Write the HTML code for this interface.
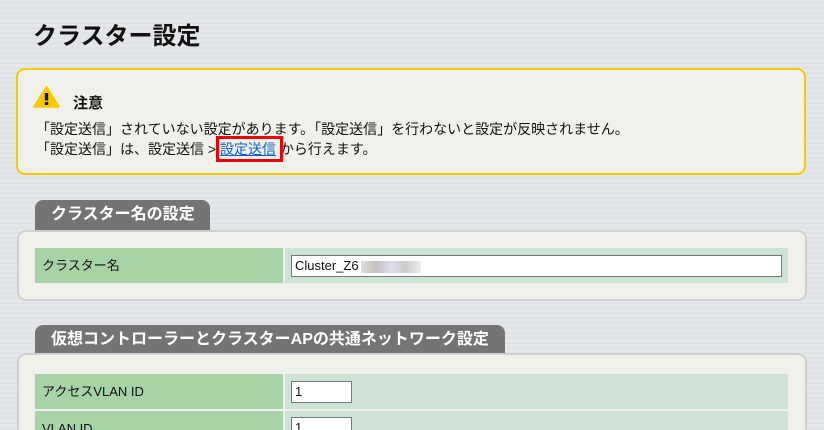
<!DOCTYPE html>
<html><head><meta charset="utf-8"><style>
html,body{margin:0;padding:0;width:824px;height:430px;overflow:hidden}
#w{position:relative;width:824px;height:430px;overflow:hidden;font-family:"Liberation Sans","Noto Sans CJK JP",sans-serif;
background:repeating-linear-gradient(180deg,#e4e6e9 0,#e4e6e9 2px,#dcdfe2 3px,#e8eaec 5px);color:#111}
.abs{position:absolute}
h1{position:absolute;left:33px;top:16px;margin:0;font-size:24px;font-weight:bold}
.note{left:16px;top:68px;width:786px;height:103px;border:2px solid #f8c800;border-radius:9px;background:#f1f1eb}
.t{font-size:14px;white-space:nowrap}
.tab{background:#747474;color:#fff;font-weight:bold;font-size:16px;border-radius:8px 8px 0 0;line-height:30px;padding-left:16px;box-sizing:border-box}
.panel{background:#f1f1eb;border:2px solid #cfd0d0;border-radius:9px;box-sizing:border-box}
.lab{background:#a6d4a6;font-size:13px;line-height:35px;padding-left:7px;box-sizing:border-box;overflow:hidden}
.val{background:#cde3d6}
.inp{background:#fff;border:1px solid #777;box-sizing:border-box;font-size:13px;line-height:19px;padding-left:3px;overflow:hidden}
</style></head><body><div id="w">
<h1>クラスター設定</h1>
<div class="abs note"></div>
<svg class="abs" style="left:33px;top:86px" width="27" height="22" viewBox="0 0 27 22"><path d="M13.5 1.5 L25.5 20.5 L1.5 20.5 Z" fill="#f8c800" stroke="#f8c800" stroke-linejoin="round" stroke-width="2.5"/><rect x="11.8" y="7" width="3.4" height="7.5" fill="#111"/><rect x="11.8" y="16" width="3.4" height="3" fill="#111"/></svg>
<div class="abs t" style="left:73px;top:92px;font-size:15px;font-weight:bold">注意</div>
<div class="abs t" style="left:36px;top:119px">「設定送信」されていない設定があります。「設定送信」を行わないと設定が反映されません。</div>
<div class="abs t" style="left:36px;top:139px">「設定送信」は、設定送信 &gt; <span style="color:#0a5fd0;text-decoration:underline">設定送信</span> から行えます。</div>
<div class="abs" style="left:216px;top:136px;width:67px;height:26px;border:3px solid #e8000b;box-sizing:border-box"></div>

<div class="abs tab" style="left:35px;top:200px;width:175px;height:31px">クラスター名の設定</div>
<div class="abs panel" style="left:17px;top:230px;width:790px;height:71px"></div>
<div class="abs lab" style="left:35px;top:248px;width:248px;height:35px">クラスター名</div>
<div class="abs val" style="left:285px;top:248px;width:503px;height:35px"></div>
<div class="abs inp" style="left:291px;top:255px;width:491px;height:22px">Cluster_Z6<span style="display:inline-block;width:60px;height:12px;background:linear-gradient(90deg,#ddd,#c8c0c0,#dde,#ccc,#eee);vertical-align:middle;margin-left:2px"></span></div>

<div class="abs tab" style="left:35px;top:325px;width:470px;height:30px">仮想コントローラーとクラスターAPの共通ネットワーク設定</div>
<div class="abs panel" style="left:17px;top:353px;width:790px;height:77px;border-bottom:none;border-radius:9px 9px 0 0"></div>
<div class="abs lab" style="left:35px;top:374px;width:248px;height:35px">アクセスVLAN ID</div>
<div class="abs val" style="left:285px;top:374px;width:503px;height:35px"></div>
<div class="abs inp" style="left:291px;top:381px;width:61px;height:22px">1</div>
<div class="abs lab" style="left:35px;top:411px;width:248px;height:19px;line-height:35px">VLAN ID</div>
<div class="abs val" style="left:285px;top:411px;width:503px;height:19px"></div>
<div class="abs inp" style="left:291px;top:417px;width:61px;height:13px;border-bottom:none">1</div>
</div></body></html>
